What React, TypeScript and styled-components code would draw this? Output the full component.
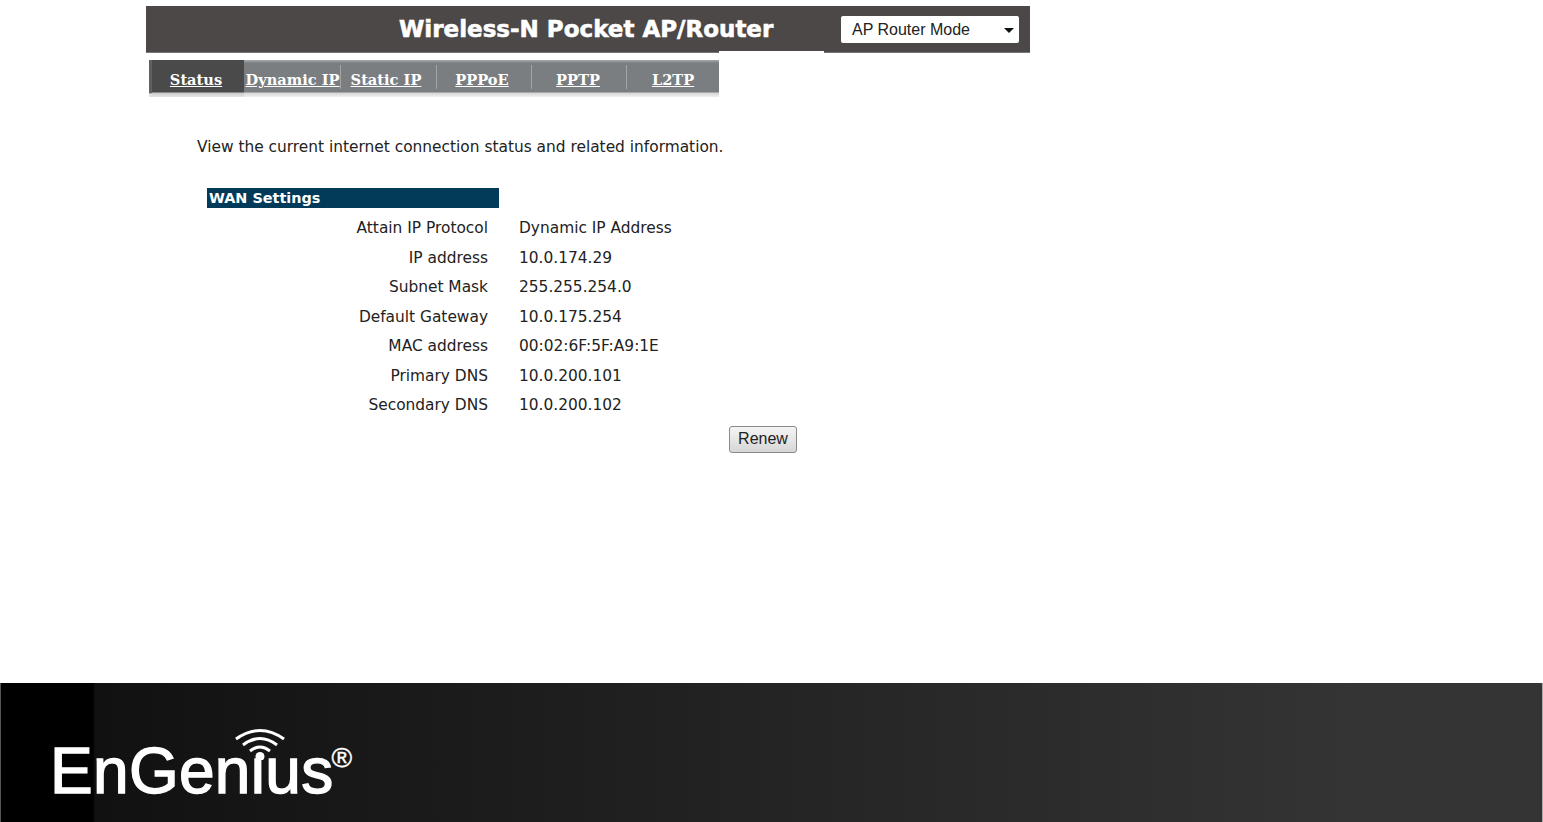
import React from "react";
import styled, { createGlobalStyle } from "styled-components";

const GlobalStyle = createGlobalStyle`
  html, body {
    margin: 0;
    padding: 0;
    background: #fff;
  }
`;

const tabs = [
  { name: "Status", width: 92, nudge: 4 },
  { name: "Dynamic IP", width: 97, nudge: 0 },
  { name: "Static IP", width: 96, nudge: 6 },
  { name: "PPPoE", width: 95, nudge: 5 },
  { name: "PPTP", width: 95, nudge: 3 },
  { name: "L2TP", width: 92, nudge: 0 },
];

const rows = [
  ["Attain IP Protocol", "Dynamic IP Address"],
  ["IP address", "10.0.174.29"],
  ["Subnet Mask", "255.255.254.0"],
  ["Default Gateway", "10.0.175.254"],
  ["MAC address", "00:02:6F:5F:A9:1E"],
  ["Primary DNS", "10.0.200.101"],
  ["Secondary DNS", "10.0.200.102"],
];

const WifiMark = () => (
  <WifiSvg viewBox="0 0 52 32" aria-hidden="true">
    {/* the signal dot stands in for the dot of the i */}
    <rect x="19" y="14" width="14" height="12" />
    <path d="M2 11 Q26 -6 50 11" />
    <path d="M9 17 Q26 4 43 17" />
    <path d="M16 23 Q26 15 36 23" />
    <circle cx="26" cy="28.5" r="4.5" />
  </WifiSvg>
);

const App = () => (
  <Page>
    <GlobalStyle />
    <Main>
      <HeaderBar>
        <Title>Wireless-N Pocket AP/Router</Title>
        <ModeSelect>
          AP Router Mode
          <Caret />
        </ModeSelect>
      </HeaderBar>
      <TabBar>
        {tabs.map((tab, i) => (
          <Tab
            key={tab.name}
            $active={i === 0}
            $divided={i > 0 && i < tabs.length - 1}
            $width={tab.width}
            $nudge={tab.nudge}
          >
            <a>{tab.name}</a>
          </Tab>
        ))}
      </TabBar>
      <Intro>View the current internet connection status and related information.</Intro>
      <SectionTitle>WAN Settings</SectionTitle>
      <InfoGrid>
        {rows.map(([label, value]) => (
          <React.Fragment key={label}>
            <Label>{label}</Label>
            <Value>{value}</Value>
          </React.Fragment>
        ))}
      </InfoGrid>
      <RenewButton type="button">Renew</RenewButton>
    </Main>
    <Footer>
      <Logo>
        <WifiMark />
        <LogoName>EnGenius</LogoName>
        <LogoMark>®</LogoMark>
      </Logo>
    </Footer>
  </Page>
);

export default App;

const Page = styled.div`
  display: flex;
  flex-direction: column;
  height: 100vh;
  overflow: hidden;
  font-family: "DejaVu Sans", sans-serif;
  color: #222;
`;

const Main = styled.main`
  flex: 1;
  display: flex;
  flex-direction: column;
  align-items: flex-start;
  padding: 6px 0 0 146px;
`;

const HeaderBar = styled.div`
  position: relative;
  box-sizing: border-box;
  width: 884px;
  height: 47px;
  display: flex;
  align-items: center;
  background: #4b4847;
  border-bottom: 1px solid #77757a;
  padding: 0 11px 0 253px;

  &::after {
    content: "";
    position: absolute;
    left: 573px;
    bottom: -1px;
    width: 105px;
    height: 2px;
    background: #fff;
  }
`;

const Title = styled.h1`
  flex: 1;
  margin: 0;
  font-family: "DejaVu Sans", sans-serif;
  font-size: 23px;
  line-height: 42px;
  font-weight: 700;
  color: #fff;
  -webkit-text-stroke: 0.6px #fff;
  white-space: nowrap;
`;

const ModeSelect = styled.div`
  box-sizing: border-box;
  width: 178px;
  height: 27px;
  display: flex;
  align-items: center;
  justify-content: space-between;
  padding: 1px 5px 0 11px;
  background: #fff;
  border-radius: 2px;
  font-family: "Liberation Sans", sans-serif;
  font-size: 16px;
  color: #222;
`;

const Caret = styled.span`
  width: 0;
  height: 0;
  border-left: 5px solid transparent;
  border-right: 5px solid transparent;
  border-top: 5px solid #111;
  margin-top: 1px;
`;

const TabBar = styled.nav`
  box-sizing: border-box;
  width: 570px;
  height: 37px;
  margin: 7px 0 0 3px;
  display: flex;
  background: linear-gradient(
    to bottom,
    #a9abad 0,
    #7b7e80 3px,
    #7b7e80 32px,
    #d5d6d6 33px,
    #f0f0f0 37px
  );
  border-left: 3px solid;
  border-image: linear-gradient(to bottom, #5f6060 0, #5f6060 32px, #e0e0e0 33px) 1;
`;

const Tab = styled.div<{ $active?: boolean; $divided?: boolean; $width: number; $nudge: number }>`
  position: relative;
  box-sizing: border-box;
  flex: none;
  width: ${(p) => p.$width}px;
  height: 37px;
  display: flex;
  justify-content: center;
  padding: 9px ${(p) => p.$nudge}px 0 0;
  background: ${(p) =>
    p.$active
      ? "linear-gradient(to bottom, #4b4a4a 0, #4b4a4a 32px, #c9c9c9 33px, #e6e6e6 37px)"
      : "transparent"};

  &::after {
    content: "";
    display: ${(p) => (p.$divided ? "block" : "none")};
    position: absolute;
    right: 0;
    top: 5px;
    width: 1px;
    height: 24px;
    background: #a3a5a7;
  }

  a {
    font-family: "DejaVu Serif", serif;
    font-size: 14.6px;
    line-height: 22px;
    font-weight: 700;
    color: #fff;
    text-decoration: underline;
    white-space: nowrap;
  }
`;

const Intro = styled.p`
  margin: 40px 0 0 51px;
  font-size: 15.4px;
  line-height: 21px;
`;

const SectionTitle = styled.h2`
  box-sizing: border-box;
  width: 292px;
  height: 20px;
  margin: 30px 0 0 61px;
  padding-left: 2px;
  background: #023a5a;
  color: #fff;
  font-size: 14.4px;
  line-height: 20px;
  font-weight: 700;
`;

const InfoGrid = styled.div`
  display: grid;
  grid-template-columns: 281px auto;
  grid-auto-rows: 29.5px;
  column-gap: 31px;
  margin: 6px 0 0 61px;
  font-size: 15.4px;
  line-height: 29.5px;
`;

const Label = styled.div`
  text-align: right;
  white-space: nowrap;
`;

const Value = styled.div`
  white-space: nowrap;
`;

const RenewButton = styled.button`
  box-sizing: border-box;
  width: 68px;
  height: 27px;
  margin: 5px 0 0 583px;
  padding: 0;
  border: 1px solid #8a8a8a;
  border-radius: 3px;
  background: linear-gradient(to bottom, #f4f4f4, #e6e6e6 50%, #d6d6d6);
  font-family: "Liberation Sans", sans-serif;
  font-size: 16px;
  color: #222;
`;

const Footer = styled.footer`
  box-sizing: border-box;
  flex: none;
  height: 139px;
  padding: 58px 0 0 49px;
  border-left: 1px solid #555;
  border-right: 1px solid #aaa;
  background: linear-gradient(to right, #000 0, #000 92px, #111 94px, #343434 1350px, #343434 100%);
`;

const Logo = styled.div`
  position: relative;
  display: inline-flex;
  align-items: flex-start;
  color: #fff;
`;

const LogoName = styled.span`
  font-family: "Liberation Sans", sans-serif;
  font-size: 64px;
  line-height: 60px;
  letter-spacing: 0.3px;
  color: #fff;
  -webkit-text-stroke: 1.4px #fff;
`;

const LogoMark = styled.span`
  font-family: "Liberation Sans", sans-serif;
  font-size: 28px;
  line-height: 28px;
  margin: 3px 0 0 -2px;
  -webkit-text-stroke: 0.4px #fff;
`;

const WifiSvg = styled.svg`
  position: absolute;
  left: 184px;
  top: -13px;
  width: 52px;
  height: 32px;
  fill: none;
  stroke: #fff;
  stroke-width: 3;

  rect {
    fill: #161616;
    stroke: none;
  }

  circle {
    fill: #fff;
    stroke: none;
  }
`;
